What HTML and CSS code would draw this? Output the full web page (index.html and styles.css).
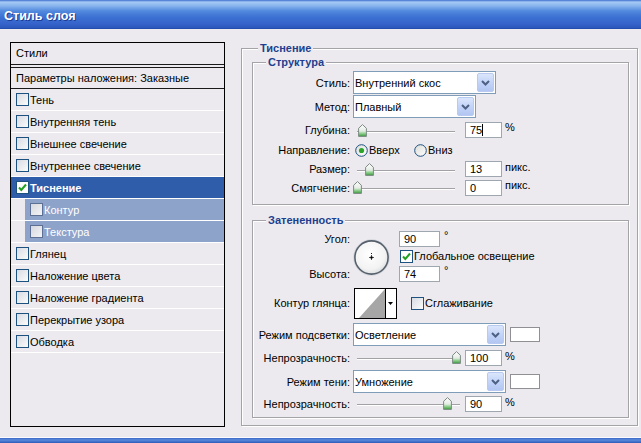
FILE: index.html
```html
<!DOCTYPE html>
<html lang="ru">
<head>
<meta charset="utf-8">
<title>Стиль слоя</title>
<link rel="stylesheet" href="styles.css">
</head>
<body>
<header class="titlebar">Стиль слоя</header>
<main class="main">
  <section class="styles">
    <div class="styles-head">Стили</div>
    <div class="blend">Параметры наложения: Заказные</div>
    <ul class="fx">
      <li class="fx-row"><span class="cb"></span><span class="fx-name">Тень</span></li>
      <li class="fx-row"><span class="cb"></span><span class="fx-name">Внутренняя тень</span></li>
      <li class="fx-row"><span class="cb"></span><span class="fx-name">Внешнее свечение</span></li>
      <li class="fx-row"><span class="cb"></span><span class="fx-name">Внутреннее свечение</span></li>
      <li class="fx-row sel"><span class="cb on"><svg width="11" height="11" viewBox="0 0 11 11"><path d="M2 5.5 L4.3 8 L9 2.5" fill="none" stroke="#21a121" stroke-width="2"/></svg></span><span class="fx-name">Тиснение</span></li>
      <li class="fx-row sub"><span class="cb"></span><span class="fx-name">Контур</span></li>
      <li class="fx-row sub"><span class="cb"></span><span class="fx-name">Текстура</span></li>
      <li class="fx-row"><span class="cb"></span><span class="fx-name">Глянец</span></li>
      <li class="fx-row"><span class="cb"></span><span class="fx-name">Наложение цвета</span></li>
      <li class="fx-row"><span class="cb"></span><span class="fx-name">Наложение градиента</span></li>
      <li class="fx-row"><span class="cb"></span><span class="fx-name">Перекрытие узора</span></li>
      <li class="fx-row"><span class="cb"></span><span class="fx-name">Обводка</span></li>
    </ul>
  </section>

  <section class="group outer">
    <span class="legend legend-outer">Тиснение</span>

    <div class="group inner struct">
      <span class="legend">Структура</span>

      <div class="frow r-sel1">
        <span class="lbl">Стиль:</span>
        <div class="select w-style"><span class="sel-text">Внутренний скос</span><i class="dd"><svg width="9" height="6" viewBox="0 0 9 6"><path d="M1 1 L4.5 4.5 L8 1" fill="none" stroke="#4d6185" stroke-width="2"/></svg></i></div>
      </div>

      <div class="frow r-sel2">
        <span class="lbl">Метод:</span>
        <div class="select w-method"><span class="sel-text">Плавный</span><i class="dd"><svg width="9" height="6" viewBox="0 0 9 6"><path d="M1 1 L4.5 4.5 L8 1" fill="none" stroke="#4d6185" stroke-width="2"/></svg></i></div>
      </div>

      <div class="frow r-depth">
        <span class="lbl">Глубина:</span>
        <div class="slider short"><span class="track"></span><svg class="thumb" style="left:5px" width="9" height="13" viewBox="0 0 9 13"><use href="#thumb"/></svg></div>
        <span class="num">75<span class="caret"></span></span><span class="unit">%</span>
      </div>

      <div class="frow r-dir">
        <span class="lbl">Направление:</span>
        <span class="radio on"><svg width="13" height="13" viewBox="0 0 13 13"><circle cx="6.5" cy="6.5" r="5.8" fill="url(#rfill)" stroke="#1c5180"/><circle cx="6.5" cy="6.5" r="2.6" fill="#2aa52a"/></svg></span>
        <span class="rtext up">Вверх</span>
        <span class="radio"><svg width="13" height="13" viewBox="0 0 13 13"><circle cx="6.5" cy="6.5" r="5.8" fill="url(#rfill)" stroke="#1c5180"/></svg></span>
        <span class="rtext">Вниз</span>
      </div>

      <div class="frow r-size">
        <span class="lbl">Размер:</span>
        <div class="slider short"><span class="track"></span><svg class="thumb" style="left:12px" width="9" height="13" viewBox="0 0 9 13"><use href="#thumb"/></svg></div>
        <span class="num">13</span><span class="unit">пикс.</span>
      </div>

      <div class="frow r-soft">
        <span class="lbl">Смягчение:</span>
        <div class="slider short"><span class="track"></span><svg class="thumb" style="left:0px" width="9" height="13" viewBox="0 0 9 13"><use href="#thumb"/></svg></div>
        <span class="num">0</span><span class="unit">пикс.</span>
      </div>
    </div>

    <div class="group inner shade">
      <span class="legend">Затененность</span>

      <div class="angle">
        <span class="lbl a-lbl1">Угол:</span>
        <svg class="dial" width="37" height="37" viewBox="0 0 37 37">
          <circle cx="18.5" cy="18.5" r="17.8" fill="none" stroke="#d3d6dc" stroke-width="1"/>
          <circle cx="18.5" cy="18.5" r="16.6" fill="url(#dialfill)" stroke="#56606c" stroke-width="1.6"/>
          <path d="M16 18.5 H21 M18.5 16 V21" stroke="#555" stroke-width="1"/>
          <rect x="17.5" y="17.5" width="2" height="2" fill="#000"/>
          <rect x="18" y="14" width="1" height="1" fill="#222"/>
        </svg>
        <div class="a-top"><span class="num wide">90</span><span class="deg">°</span></div>
        <div class="a-mid"><span class="cb on"><svg width="11" height="11" viewBox="0 0 11 11"><path d="M2 5.5 L4.3 8 L9 2.5" fill="none" stroke="#21a121" stroke-width="2"/></svg></span><span class="cb-text">Глобальное освещение</span></div>
        <span class="lbl a-lbl2">Высота:</span>
        <div class="a-bot"><span class="num wide">74</span><span class="deg">°</span></div>
      </div>

      <div class="frow r-contour">
        <span class="lbl">Контур глянца:</span>
        <div class="contour">
          <svg class="c-prev" width="30" height="29" viewBox="0 0 30 29"><polygon points="4,29 30,0 30,29" fill="#a6a6a6"/></svg>
          <span class="c-arrow"><svg width="5" height="3" viewBox="0 0 5 3"><polygon points="0,0 5,0 2.5,3" fill="#000"/></svg></span>
        </div>
        <span class="cb aa"></span><span class="cb-text">Сглаживание</span>
      </div>

      <div class="frow r-hl">
        <span class="lbl">Режим подсветки:</span>
        <div class="select w-mode"><span class="sel-text">Осветление</span><i class="dd"><svg width="9" height="6" viewBox="0 0 9 6"><path d="M1 1 L4.5 4.5 L8 1" fill="none" stroke="#4d6185" stroke-width="2"/></svg></i></div>
        <span class="swatch"></span>
      </div>

      <div class="frow r-op1">
        <span class="lbl">Непрозрачность:</span>
        <div class="slider long"><span class="track"></span><svg class="thumb" style="left:99px" width="9" height="13" viewBox="0 0 9 13"><use href="#thumb"/></svg></div>
        <span class="num">100</span><span class="unit">%</span>
      </div>

      <div class="frow r-sh">
        <span class="lbl">Режим тени:</span>
        <div class="select w-mode"><span class="sel-text">Умножение</span><i class="dd"><svg width="9" height="6" viewBox="0 0 9 6"><path d="M1 1 L4.5 4.5 L8 1" fill="none" stroke="#4d6185" stroke-width="2"/></svg></i></div>
        <span class="swatch"></span>
      </div>

      <div class="frow r-op2">
        <span class="lbl">Непрозрачность:</span>
        <div class="slider long"><span class="track"></span><svg class="thumb" style="left:90px" width="9" height="13" viewBox="0 0 9 13"><use href="#thumb"/></svg></div>
        <span class="num">90</span><span class="unit">%</span>
      </div>
    </div>
  </section>
</main>
<footer class="frame-bottom"></footer>

<svg class="defs" width="0" height="0" aria-hidden="true">
  <defs>
    <linearGradient id="thumbfill" x1="0" y1="0" x2="0" y2="1">
      <stop offset="0" stop-color="#ffffff"/>
      <stop offset="0.55" stop-color="#e4ece4"/>
      <stop offset="0.75" stop-color="#8fcf8f"/>
      <stop offset="1" stop-color="#3a9a3a"/>
    </linearGradient>
    <radialGradient id="dialfill" cx="0.45" cy="0.4" r="0.65">
      <stop offset="0" stop-color="#ffffff"/>
      <stop offset="0.7" stop-color="#f3f3f3"/>
      <stop offset="1" stop-color="#d6d8dc"/>
    </radialGradient>
    <linearGradient id="rfill" x1="0" y1="0" x2="1" y2="1">
      <stop offset="0" stop-color="#dcdcd7"/>
      <stop offset="1" stop-color="#ffffff"/>
    </linearGradient>
    <symbol id="thumb" viewBox="0 0 9 13">
      <path d="M4.5 0.6 L8.4 4.3 L8.4 12.4 L0.6 12.4 L0.6 4.3 Z" fill="url(#thumbfill)" stroke="#7c8a84" stroke-width="1"/>
    </symbol>
  </defs>
</svg>
</body>
</html>
```

FILE: styles.css
```css
* { box-sizing: border-box; }

html, body { margin: 0; padding: 0; }

body {
  width: 641px;
  height: 443px;
  overflow: hidden;
  background: #eceaee;
  font-family: "Liberation Sans", Arial, sans-serif;
  font-size: 11px;
  color: #000;
  display: flex;
  flex-direction: column;
}

.defs { position: absolute; width: 0; height: 0; }

/* ---------- title bar ---------- */
.titlebar {
  flex: none;
  height: 29px;
  padding: 3px 0 0 4px;
  display: flex;
  align-items: center;
  color: #fff;
  font-weight: bold;
  font-size: 12.5px;
  text-shadow: 1px 1px 0 #1b3c94;
  background: linear-gradient(180deg,
    #3f6fcf 0px, #a6c9f4 2px, #86b3ee 6px, #5289de 11px,
    #3d71d3 17px, #3563c9 24px, #2b57bb 28px, #1d43a0 29px);
}

/* ---------- main area ---------- */
.main {
  flex: 1;
  display: flex;
  align-items: flex-start;
  gap: 16px;
  padding: 13px 0 0 10px;
}

.frame-bottom {
  flex: none;
  height: 6px;
  border-top: 1px solid #fbfbfd;
  background: linear-gradient(180deg, #3a68c6, #5a8ada 40%, #2d5bbd);
}

/* ---------- styles list ---------- */
.styles {
  width: 215px;
  height: 385px;
  border: 1px solid #000;
  flex: none;
}

.styles-head {
  height: 22px;
  line-height: 21px;
  padding-left: 5px;
  border-bottom: 1px solid #1a1a1a;
  margin-bottom: 2px;
}

.blend {
  height: 22px;
  line-height: 20px;
  padding-left: 5px;
  border-top: 1px solid #1a1a1a;
  border-bottom: 1px solid #1a1a1a;
}

.fx { list-style: none; margin: 0; padding: 0; }

.fx-row {
  height: 22px;
  display: flex;
  align-items: center;
  padding-left: 5px;
  border-bottom: 1px solid #ffffff;
}

.fx-name { margin-left: 1px; }

.fx-row.sel {
  background: #2f5daa;
  color: #fff;
  font-weight: bold;
}

.fx-row.sub {
  padding-left: 19px;
  color: #fff;
  background: linear-gradient(90deg, transparent 14px, #8ea3ca 14px);
}

/* checkbox */
.cb {
  width: 13px;
  height: 13px;
  flex: none;
  border: 1px solid #1c5180;
  background: linear-gradient(135deg, #d7dbe2, #fbfbfb);
  display: inline-flex;
  align-items: center;
  justify-content: center;
}
.cb.on { background: #fff; }
.fx-row.sub .cb { border-color: #5d6f93; background: linear-gradient(135deg, #d6d8de, #f4f4f6); }

/* ---------- group boxes ---------- */
.group {
  position: relative;
  border: 1px solid #a4a4a8;
  box-shadow: inset 1px 1px 0 #fff, 1px 1px 0 #fff;
}

.legend {
  position: absolute;
  top: -7px;
  left: 13px;
  padding: 0 2px;
  line-height: 13px;
  background: #eceaee;
  color: #1e3f8f;
  font-weight: bold;
}
.legend-outer { left: 16px; }

.outer {
  flex: none;
  width: 397px;
  height: 378px;
  margin-top: 6px;
  padding: 13px 8px 7px 10px;
}

.inner { width: 377px; }

.struct {
  height: 143px;
  margin-bottom: 15px;
  padding-top: 8px;
}

.shade {
  height: 198px;
  padding-top: 10px;
}

/* ---------- form rows ---------- */
.frow {
  display: flex;
  align-items: center;
}

.lbl {
  flex: none;
  width: 97px;
  margin-right: 3px;
  text-align: right;
  white-space: nowrap;
}

.r-sel1 { height: 23px; }
.r-sel2 { height: 23px; margin-top: 1px; }
.r-depth { height: 20px; margin-top: 2px; }
.r-dir { height: 20px; }
.r-size { height: 18px; }
.r-soft { height: 19px; }

.r-contour { height: 30px; margin-top: 6px; }
.r-hl { height: 23px; margin-top: 5px; }
.r-op1 { height: 17px; margin-top: 3px; }
.r-sh { height: 23px; margin-top: 4px; }
.r-op2 { height: 17px; margin-top: 2px; }

/* select */
.select {
  flex: none;
  display: flex;
  height: 23px;
  border: 1px solid #7f9db9;
  background: #fff;
}
.w-style { width: 143px; }
.w-method { width: 123px; }
.w-mode { width: 153px; }

.sel-text {
  flex: 1;
  display: flex;
  align-items: center;
  padding-left: 1px;
  padding-top: 1px;
  white-space: nowrap;
  overflow: hidden;
}

.dd {
  flex: none;
  width: 17px;
  margin: 1px;
  border: 1px solid #b8caf2;
  border-radius: 2px;
  background: linear-gradient(180deg, #dbe6fc, #c3d4f8 50%, #b2c6f2);
  display: flex;
  align-items: center;
  justify-content: center;
}

/* number fields */
.num {
  flex: none;
  display: inline-flex;
  align-items: center;
  width: 37px;
  height: 16px;
  padding-left: 4px;
  border: 1px solid #9ea6b0;
  background: #fff;
}
.num.wide { width: 41px; }

.caret {
  display: inline-block;
  width: 1px;
  height: 12px;
  background: #000;
}

.unit {
  margin-left: 3px;
  align-self: flex-start;
  margin-top: 1px;
  white-space: nowrap;
}

.deg {
  margin-left: 4px;
  align-self: flex-start;
  line-height: 9px;
  font-size: 11px;
}

/* sliders */
.slider {
  position: relative;
  flex: none;
  width: 112px;
  height: 13px;
}
.track {
  position: absolute;
  left: 4px;
  top: 7px;
  height: 2px;
  border-top: 1px solid #a2a2a6;
  border-bottom: 1px solid #ffffff;
}
.slider.short .track { width: 98px; }
.slider.long .track { width: 103px; }
.thumb {
  position: absolute;
  top: 0;
}

/* radios */
.radio {
  flex: none;
  width: 13px;
  height: 13px;
  display: inline-flex;
  margin-left: 2px;
}
.rtext { margin-left: 1px; }
.rtext.up { width: 43px; }

/* angle block */
.angle {
  display: grid;
  grid-template-columns: 97px 37px auto;
  grid-template-rows: 16px 18px 17px;
  column-gap: 3px;
}
.a-lbl1 { grid-column: 1; grid-row: 1; align-self: center; }
.a-lbl2 { grid-column: 1; grid-row: 3; align-self: center; }
.dial { grid-column: 2; grid-row: 1 / 4; align-self: center; margin-top: 1px; }
.a-top, .a-mid, .a-bot {
  grid-column: 3;
  display: flex;
  align-items: center;
  margin-left: 6px;
}
.a-top { grid-row: 1; }
.a-mid { grid-row: 2; margin-left: 7px; }
.a-bot { grid-row: 3; align-items: flex-end; }
.a-bot .deg { align-self: flex-start; margin-top: 1px; }

.cb-text { margin-left: 1px; white-space: nowrap; }

/* gloss contour */
.contour {
  flex: none;
  display: flex;
  width: 43px;
  height: 31px;
  margin-left: 1px;
  border: 1px solid #000;
  background: #fff;
}
.c-prev {
  flex: none;
  border-right: 1px solid #000;
  width: 31px;
  height: 29px;
}
.c-arrow {
  flex: 1;
  display: flex;
  align-items: center;
  justify-content: center;
  padding-right: 1px;
}

.cb.aa { margin-left: 14px; }

/* colour swatches */
.swatch {
  flex: none;
  width: 30px;
  height: 15px;
  margin-left: 4px;
  border: 1px solid #8f8f94;
  background: #fff;
}
```
